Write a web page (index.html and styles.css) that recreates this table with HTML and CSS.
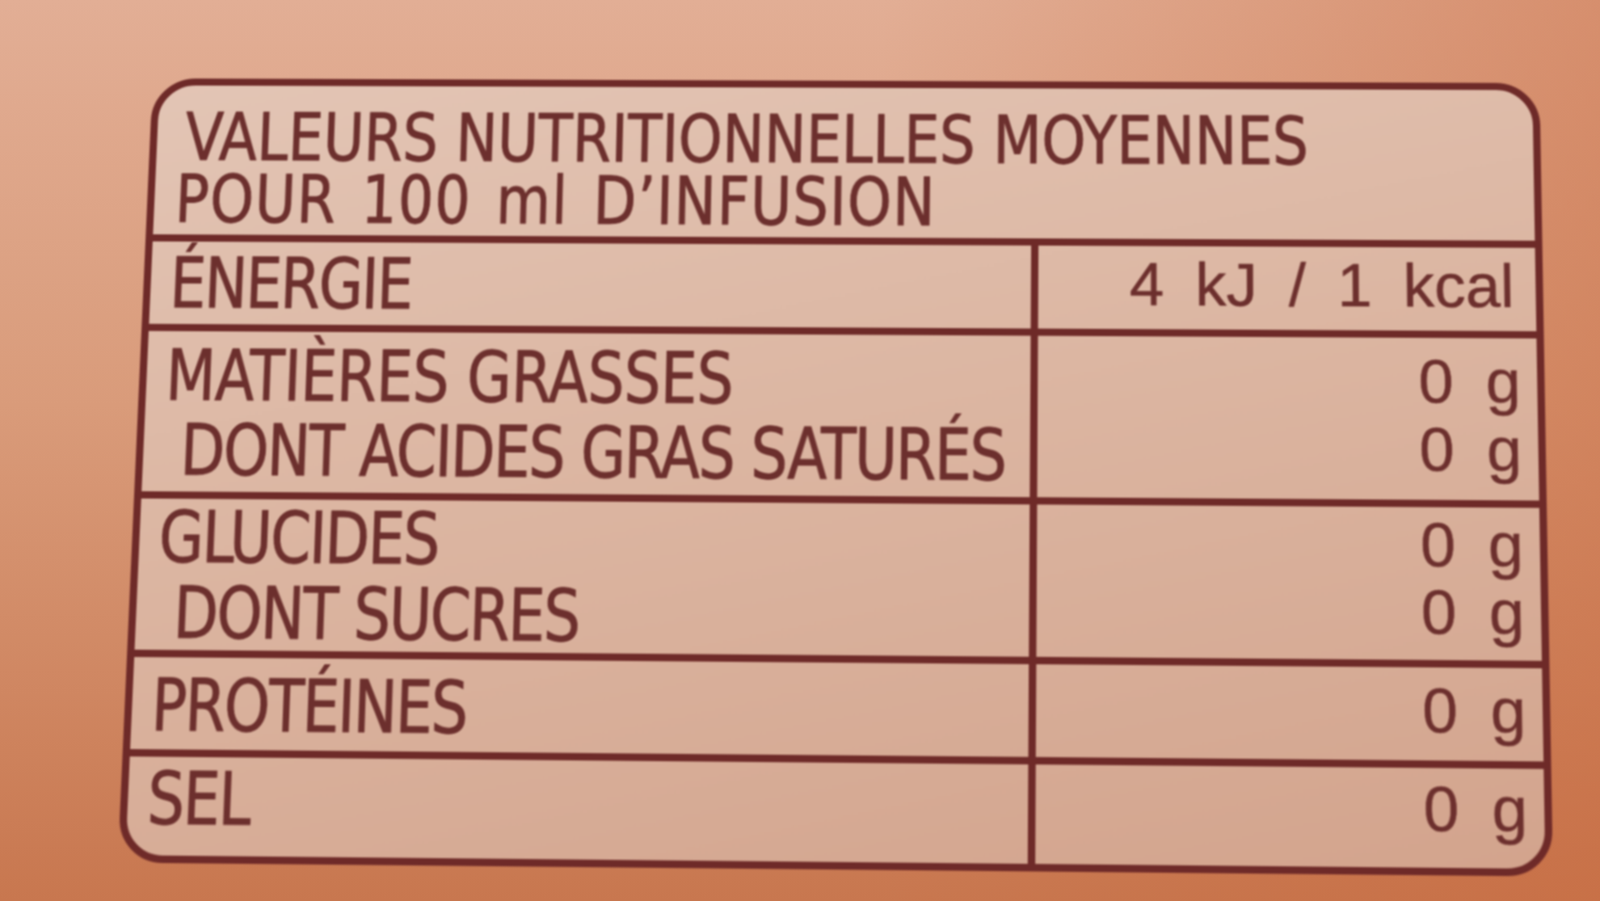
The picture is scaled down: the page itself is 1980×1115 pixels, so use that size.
FILE: index.html
```html
<!DOCTYPE html>
<html lang="fr">
<head>
<meta charset="utf-8">
<title>Valeurs nutritionnelles</title>
<link rel="stylesheet" href="styles.css">
</head>
<body>
<div class="stage">
  <div class="panel">
    <div class="cell head">
      <div class="hline h1"><span class="t">VALEURS NUTRITIONNELLES MOYENNES</span></div>
      <div class="hline h2"><span class="t">POUR 100 ml D’INFUSION</span></div>
    </div>

    <div class="cell label row-energie"><span class="t">ÉNERGIE</span></div>
    <div class="cell value row-energie"><span class="energy">4 kJ / 1 kcal</span></div>

    <div class="cell label row-mat lh2">
      <div class="wide"><span class="t">MATIÈRES GRASSES</span></div>
      <div class="sub"><span class="t">DONT ACIDES GRAS SATURÉS</span></div>
    </div>
    <div class="cell value row-mat v-mat">
      <div>0 g</div>
      <div>0 g</div>
    </div>

    <div class="cell label row-glu lh2">
      <div><span class="t">GLUCIDES</span></div>
      <div class="sub"><span class="t">DONT SUCRES</span></div>
    </div>
    <div class="cell value row-glu v-glu">
      <div>0 g</div>
      <div>0 g</div>
    </div>

    <div class="cell label row-pro"><span class="t">PROTÉINES</span></div>
    <div class="cell value row-pro">0 g</div>

    <div class="cell label row-sel"><span class="t">SEL</span></div>
    <div class="cell value row-sel">0 g</div>
  </div>
</div>
</body>
</html>
```

FILE: styles.css
```css
html, body {
  margin: 0;
  padding: 0;
}

body {
  width: 1980px;
  height: 1115px;
  overflow: hidden;
  background:
    linear-gradient(90deg, rgba(214,130,90,0) 0%, rgba(214,130,90,0) 55%, rgba(200,105,62,0.45) 100%),
    linear-gradient(180deg, #e2ae95 0%, #d99b7a 45%, #c8774f 100%);
}

.stage {
  padding: 97px 0 0 189px;
}

.panel {
  box-sizing: border-box;
  width: 1720px;
  height: 974px;
  border: 9px solid #6e2a28;
  border-radius: 54px;
  overflow: hidden;
  display: grid;
  grid-template-columns: 1086px 1fr;
  grid-template-rows: 190px 113px 209px 195px 121px 128px;
  background: linear-gradient(168deg, #e3c5b5 0%, #dcb6a2 45%, #d3a48d 100%);
  color: #6c2f2d;
  transform-origin: 0 0;
  transform: matrix3d(0.986808, 0.003335, 0, -0.0000064, -0.043011, 0.9628, 0, -0.000034596, 0, 0, 1, 0, 0, 0, 0, 1);
  filter: blur(1.1px);
}

.cell {
  box-sizing: border-box;
  border-top: 9px solid #6e2a28;
  white-space: nowrap;
}

.t {
  display: inline-block;
  transform-origin: 0 50%;
}

.head {
  grid-column: 1 / 3;
  border-top: 0;
  padding: 27px 0 0 26px;
  font-family: "Liberation Sans Narrow", "DejaVu Sans Condensed", "Liberation Sans", sans-serif;
  font-size: 84px;
  line-height: 79px;
  -webkit-text-stroke: 1px #6c2f2d;
}

.head .t {
  transform: scaleX(0.918);
}

.h1 {
  padding-left: 9px;
}

.h2 {
  letter-spacing: 1.5px;
  word-spacing: 8px;
}

.label {
  padding-left: 24px;
  font-family: "Liberation Sans Narrow", "DejaVu Sans Condensed", "Liberation Sans", sans-serif;
  font-size: 88px;
  line-height: 88px;
  letter-spacing: -2px;
  -webkit-text-stroke: 1px #6c2f2d;
}

.label .t {
  transform: scaleX(0.895);
}

.label.lh2 {
  line-height: 93px;
}

.wide {
  letter-spacing: -0.3px;
}

.sub {
  padding-left: 22px;
}

.value {
  border-left: 9px solid #6e2a28;
  padding-right: 20px;
  text-align: right;
  font-family: "Liberation Sans", Arial, sans-serif;
  font-size: 76px;
  line-height: 76px;
  word-spacing: 18px;
  -webkit-text-stroke: 0.6px #6c2f2d;
}

.energy {
  word-spacing: 17px;
  margin-right: 6px;
}

.label.row-energie { padding-top: 9px; }
.value.row-energie { padding-top: 10px; }

.label.row-mat { padding-top: 9px; }
.value.v-mat { padding-top: 12px; line-height: 84px; }

.label.row-glu { padding-top: 1px; }
.value.v-glu { padding-top: 5px; line-height: 82px; }

.label.row-pro { padding-top: 15px; }
.value.row-pro { padding-top: 14px; }

.label.row-sel { padding-top: 7px; }
.value.row-sel { padding-top: 11px; }
```
